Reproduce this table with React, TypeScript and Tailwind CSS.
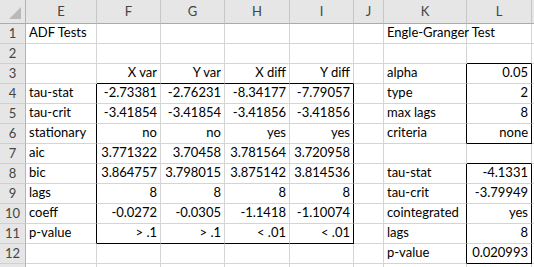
import React from 'react';

type Cell = { v: string; right?: boolean };

const cols = ['E', 'F', 'G', 'H', 'I', 'J', 'K', 'L'];
const widths: Record<string, string> = {
  E: 'w-[71px]',
  F: 'w-[64px]',
  G: 'w-[64px]',
  H: 'w-[65px]',
  I: 'w-[64px]',
  J: 'w-[30px]',
  K: 'w-[83px]',
  L: 'w-[65px]',
};

const L = (v: string): Cell => ({ v });
const R = (v: string): Cell => ({ v, right: true });

// row number -> column -> cell
const sheet: Record<number, Record<string, Cell>> = {
  1: { E: L('ADF Tests'), K: L('Engle-Granger Test') },
  2: {},
  3: { F: R('X var'), G: R('Y var'), H: R('X diff'), I: R('Y diff'), K: L('alpha'), L: R('0.05') },
  4: { E: L('tau-stat'), F: R('-2.73381'), G: R('-2.76231'), H: R('-8.34177'), I: R('-7.79057'), K: L('type'), L: R('2') },
  5: { E: L('tau-crit'), F: R('-3.41854'), G: R('-3.41854'), H: R('-3.41856'), I: R('-3.41856'), K: L('max lags'), L: R('8') },
  6: { E: L('stationary'), F: R('no'), G: R('no'), H: R('yes'), I: R('yes'), K: L('criteria'), L: R('none') },
  7: { E: L('aic'), F: R('3.771322'), G: R('3.70458'), H: R('3.781564'), I: R('3.720958') },
  8: { E: L('bic'), F: R('3.864757'), G: R('3.798015'), H: R('3.875142'), I: R('3.814536'), K: L('tau-stat'), L: R('-4.1331') },
  9: { E: L('lags'), F: R('8'), G: R('8'), H: R('8'), I: R('8'), K: L('tau-crit'), L: R('-3.79949') },
  10: { E: L('coeff'), F: R('-0.0272'), G: R('-0.0305'), H: R('-1.1418'), I: R('-1.10074'), K: L('cointegrated'), L: R('yes') },
  11: { E: L('p-value'), F: R('> .1'), G: R('> .1'), H: R('< .01'), I: R('< .01'), K: L('lags'), L: R('8') },
  12: { K: L('p-value'), L: R('0.020993') },
  13: {},
};

const inRange = (r: number, a: number, b: number) => r >= a && r <= b;

const blackRight = (c: string, r: number) =>
  ((c === 'E' || c === 'I') && inRange(r, 4, 11)) ||
  ((c === 'K' || c === 'L') && (inRange(r, 3, 6) || inRange(r, 8, 12)));

const blackBottom = (c: string, r: number) =>
  (['F', 'G', 'H', 'I'].includes(c) && (r === 3 || r === 11)) ||
  (c === 'L' && [2, 6, 7, 12].includes(r));

const font = { fontFamily: 'Lato, "Liberation Sans", sans-serif' };

const App: React.FC = () => {
  return (
    <div className="w-[534px] h-[267px] overflow-hidden bg-white text-[13px] text-black" style={font}>
      {/* column headers */}
      <div className="flex h-[24px]">
        <div className="w-[26px] h-full shrink-0 bg-[#e6e6e6] border-r border-b border-r-[#b4b4b4] border-b-[#ababab] flex items-end justify-end">
          <svg width="14" height="14" viewBox="0 0 14 14" className="mr-[3px] mb-[3px]">
            <polygon points="13,1 13,13 1,13" fill="#b9b9b9" />
          </svg>
        </div>
        {cols.map((c) => (
          <div
            key={c}
            className={`${widths[c]} shrink-0 h-full bg-[#e6e6e6] border-r border-b border-r-[#c6c6c6] border-b-[#ababab] flex items-center justify-center text-[#444444]`}
          >
            {c}
          </div>
        ))}
        <div className="flex-1 h-full bg-[#e6e6e6] border-b border-b-[#ababab]" />
      </div>

      {/* rows */}
      {Object.keys(sheet).map((k) => {
        const r = Number(k);
        const row = sheet[r];
        return (
          <div key={r} className="flex h-[20px]">
            <div className="w-[26px] shrink-0 h-full bg-[#e6e6e6] border-r border-b border-r-[#b4b4b4] border-b-[#d0d0d0] flex items-center justify-center text-[#444444]">
              {r < 13 ? r : ''}
            </div>
            {cols.map((c) => {
              const cell = row[c];
              return (
                <div
                  key={c}
                  className={`${widths[c]} shrink-0 h-full border-r border-b whitespace-nowrap overflow-visible flex items-end pb-[1px] px-[3px] ${
                    blackRight(c, r) ? 'border-r-black' : 'border-r-[#d4d4d4]'
                  } ${blackBottom(c, r) ? 'border-b-black' : 'border-b-[#d4d4d4]'} ${
                    cell?.right ? 'justify-end' : 'justify-start'
                  }`}
                >
                  {cell?.v}
                </div>
              );
            })}
            <div className="flex-1 h-full border-b border-b-[#d4d4d4]" />
          </div>
        );
      })}
    </div>
  );
};

export default App;
